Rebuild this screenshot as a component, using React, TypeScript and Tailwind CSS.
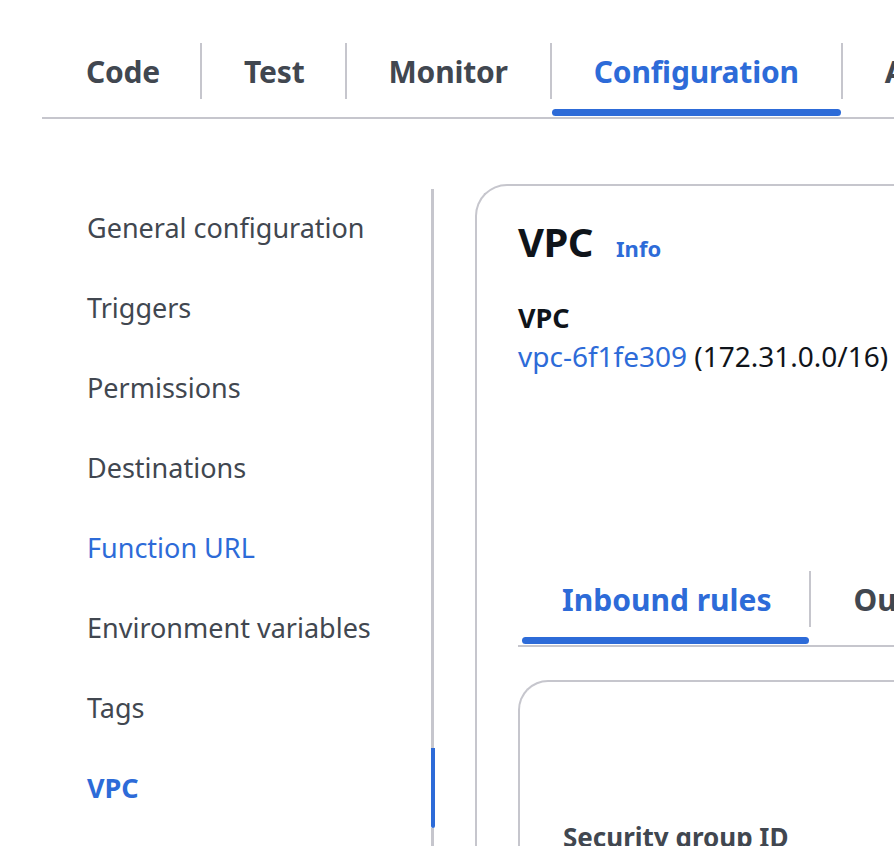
const topTabs = [
  { label: "Code", pad: "pl-[44px] pr-[40px]" },
  { label: "Test", pad: "border-l-2 border-[#c6c6cd] pl-[42px] pr-[40px]" },
  { label: "Monitor", pad: "border-l-2 border-[#c6c6cd] px-[42px]" },
  { label: "Configuration", pad: "border-l-2 border-[#c6c6cd] px-[42px]", active: true },
  { label: "Aliases", pad: "border-l-2 border-[#c6c6cd] px-[42px]" },
];

const navItems = [
  { label: "General configuration" },
  { label: "Triggers" },
  { label: "Permissions" },
  { label: "Destinations" },
  { label: "Function URL", link: true },
  { label: "Environment variables" },
  { label: "Tags" },
  { label: "VPC", active: true },
];

function TopTabs() {
  return (
    <div className="ml-[42px] flex border-b-2 border-[#c6c6cd] whitespace-nowrap">
      {topTabs.map((tab) => (
        <div key={tab.label} className="flex shrink-0 flex-col">
          <div className={"mt-[43px] flex h-[56px] items-center " + tab.pad}>
            <span
              className={
                "text-[30px] font-bold tracking-[-0.2px] " +
                (tab.active ? "text-[#2d6bd8]" : "text-[#414750]")
              }
            >
              {tab.label}
            </span>
          </div>
          <div
            className={
              "mt-[10px] mb-px h-[7px] rounded-full " +
              (tab.active ? "ml-[2px] bg-[#2d6bd8]" : "")
            }
          />
        </div>
      ))}
    </div>
  );
}

function SideNav() {
  return (
    <div className="flex w-[435px] shrink-0">
      <ul className="flex-1 pt-[69px] pl-[87px]">
        {navItems.map((item) => (
          <li
            key={item.label}
            className={
              "flex h-[80px] items-center text-[27px] " +
              (item.active
                ? "font-bold text-[#2d6bd8]"
                : item.link
                ? "text-[#2d6bd8]"
                : "text-[#414750]")
            }
          >
            {item.label}
          </li>
        ))}
      </ul>
      <div className="mt-[70px] flex w-[4px] flex-col">
        <div className="h-[559px] w-[3px] bg-[#c6c6cd]" />
        <div className="h-[80px] w-[4px] rounded-b-sm bg-[#2d6bd8]" />
        <div className="h-[40px] w-[3px] bg-[#c6c6cd]" />
      </div>
    </div>
  );
}

function VpcPanel() {
  return (
    <div className="ml-[40px] mt-[65px] flex-1 rounded-tl-[32px] border-l-2 border-t-2 border-[#c6c6cd] pl-[41px]">
      <div className="mt-[26px] flex items-baseline gap-[23px]">
        <h2 className="text-[40px] font-bold leading-[60px] tracking-[-0.5px] text-[#0f141a]">VPC</h2>
        <span className="text-[22px] font-bold text-[#2d6bd8]">Info</span>
      </div>
      <div className="mt-[26px] text-[27px] font-bold leading-[39px] text-[#0f141a]">VPC</div>
      <div className="whitespace-nowrap text-[28px] leading-[39px] text-[#0f141a]">
        <span className="text-[#2d6bd8]">vpc-6f1fe309</span> (172.31.0.0/16)
      </div>

      <div className="mt-[191px] flex whitespace-nowrap border-b-2 border-[#c6c6cd]">
        <div className="flex shrink-0 flex-col">
          <div className="mt-[4px] flex h-[56px] items-center pl-[44px] pr-[38px]">
            <span className="text-[30px] font-bold text-[#2d6bd8]">Inbound rules</span>
          </div>
          <div className="mt-[10px] mb-px ml-[4px] h-[7px] rounded-full bg-[#2d6bd8]" />
        </div>
        <div className="flex shrink-0 flex-col">
          <div className="mt-[4px] flex h-[56px] items-center border-l-2 border-[#c6c6cd] px-[42px]">
            <span className="text-[30px] font-bold text-[#414750]">Outbound rules</span>
          </div>
        </div>
      </div>

      <div className="mt-[33px] h-[300px] rounded-tl-[30px] border-l-2 border-t-2 border-[#c6c6cd] pl-[43px] pt-[136px]">
        <div className="text-[26px] font-bold text-[#414750]">Security group ID</div>
      </div>
    </div>
  );
}

export default function App() {
  return (
    <div
      className="h-[846px] w-[894px] overflow-hidden bg-white"
      style={{ fontFamily: '"Noto Sans", "Open Sans", sans-serif' }}
    >
      <TopTabs />
      <div className="flex">
        <SideNav />
        <VpcPanel />
      </div>
    </div>
  );
}
